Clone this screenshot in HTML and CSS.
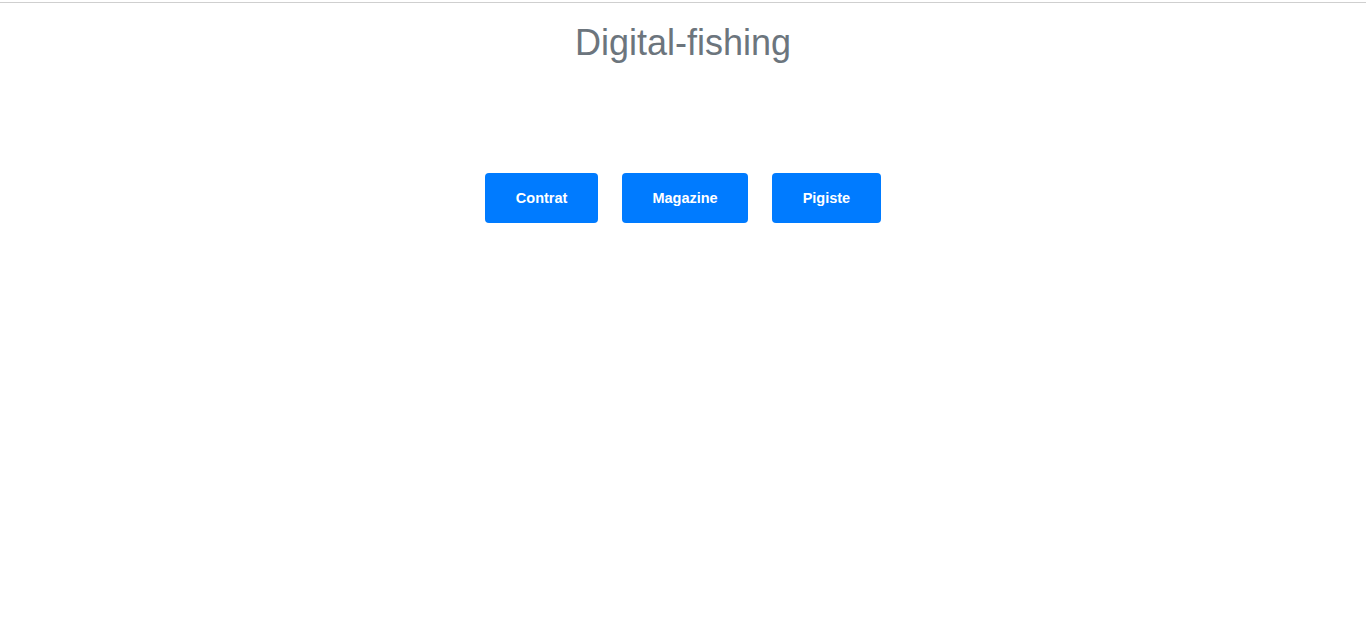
FILE: index.html
```html
<!DOCTYPE html>
<html>
<head>
<meta charset="utf-8">
<link rel="stylesheet" href="styles.css">
</head>
<body>
<div class="topline"></div>
<h1 class="title">Digital-fishing</h1>
<div class="actions">
  <button class="btn">Contrat</button>
  <button class="btn">Magazine</button>
  <button class="btn">Pigiste</button>
</div>
</body>
</html>
```

FILE: styles.css
```css
html, body {
  margin: 0;
  padding: 0;
  background: #fff;
  font-family: "Liberation Sans", Arial, sans-serif;
}
.topline {
  margin-top: 2px;
  border-top: 1px solid #cfcfcf;
}
.title {
  margin: 18px 0 0;
  text-align: center;
  font-weight: normal;
  font-size: 36px;
  line-height: 1.2;
  color: #6c757d;
}
.actions {
  display: flex;
  justify-content: center;
  gap: 24px;
  margin-top: 109px;
}
.btn {
  border: none;
  background: #007bff;
  color: #fff;
  font-family: "Liberation Sans", Arial, sans-serif;
  font-weight: bold;
  font-size: 14.5px;
  height: 50px;
  padding: 0 30.5px;
  border-radius: 4px;
}
```
